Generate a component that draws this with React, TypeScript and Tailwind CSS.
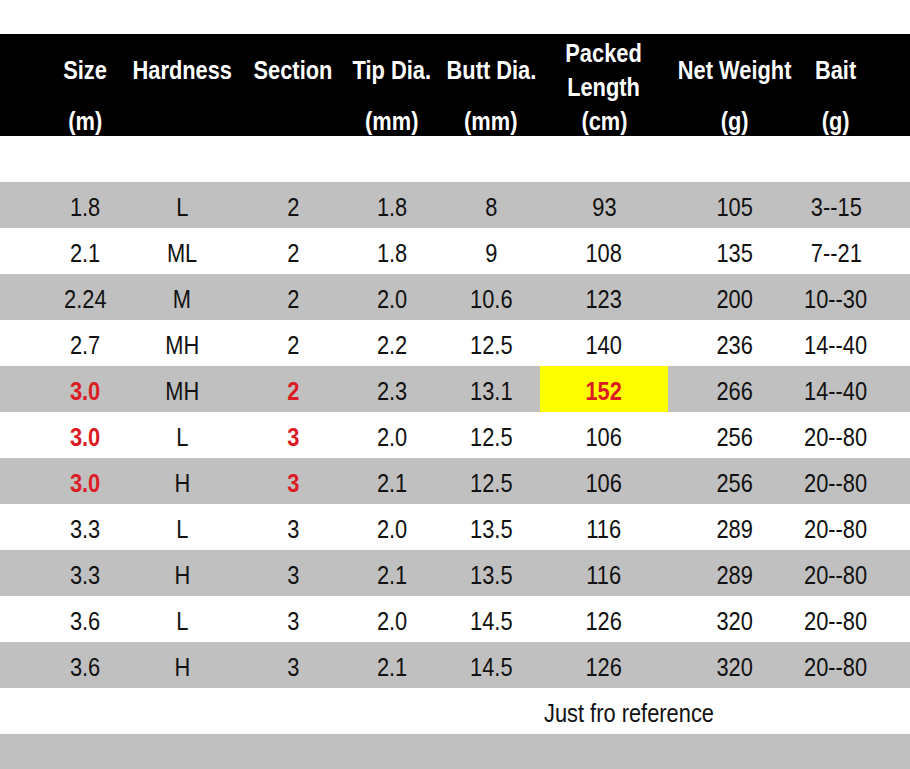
import React from 'react';

type Cell = { text: string; red?: boolean; highlight?: boolean };

const cols = 'grid grid-cols-[70px_124px_98px_100px_98px_128px_134px_68px] pl-[50px]';

const rows: string[][] = [
  ['1.8', 'L', '2', '1.8', '8', '93', '105', '3--15'],
  ['2.1', 'ML', '2', '1.8', '9', '108', '135', '7--21'],
  ['2.24', 'M', '2', '2.0', '10.6', '123', '200', '10--30'],
  ['2.7', 'MH', '2', '2.2', '12.5', '140', '236', '14--40'],
  ['3.0', 'MH', '2', '2.3', '13.1', '152', '266', '14--40'],
  ['3.0', 'L', '3', '2.0', '12.5', '106', '256', '20--80'],
  ['3.0', 'H', '3', '2.1', '12.5', '106', '256', '20--80'],
  ['3.3', 'L', '3', '2.0', '13.5', '116', '289', '20--80'],
  ['3.3', 'H', '3', '2.1', '13.5', '116', '289', '20--80'],
  ['3.6', 'L', '3', '2.0', '14.5', '126', '320', '20--80'],
  ['3.6', 'H', '3', '2.1', '14.5', '126', '320', '20--80'],
];

function toCells(row: string[], index: number): Cell[] {
  // rows 5-7 have the 3.0m models marked in red
  const marked = index >= 4 && index <= 6;
  return row.map((text, col) => ({
    text,
    red: marked && (col === 0 || col === 2 || (index === 4 && col === 5)),
    highlight: index === 4 && col === 5,
  }));
}

const headTop = ['Size', 'Hardness', 'Section', 'Tip Dia.', 'Butt Dia.', 'Packed\nLength', 'Net Weight', 'Bait'];
const headUnits = ['(m)', '', '', '(mm)', '(mm)', '(cm)', '(g)', '(g)'];

// the source picture uses a narrow face, so squeeze Arial sideways
const narrow = 'inline-block scale-x-[0.84] whitespace-pre';

export default function App() {
  return (
    <div className="w-[910px] h-[769px] overflow-hidden bg-white font-['Liberation_Sans',Arial,sans-serif] text-[26px] text-[#111]">
      <div className="h-[34px]" />

      <div className="bg-black text-white font-bold h-[102px]">
        <div className={`${cols} h-[72px]`}>
          {headTop.map((label, i) => (
            <div key={i} className="flex items-center justify-center text-center leading-[34px]">
              <span className={narrow}>{label}</span>
            </div>
          ))}
        </div>
        <div className={`${cols} h-[30px]`}>
          {headUnits.map((unit, i) => (
            <div key={i} className="flex items-center justify-center leading-none">
              <span className={narrow}>{unit}</span>
            </div>
          ))}
        </div>
      </div>

      <div className="h-[46px]" />

      {rows.map((row, r) => (
        <div key={r} className={`${cols} h-[46px] ${r % 2 === 0 ? 'bg-[#c0c0c0]' : 'bg-white'}`}>
          {toCells(row, r).map((cell, c) => (
            <div
              key={c}
              className={`flex items-center justify-center pt-[3px] leading-none ${cell.highlight ? 'bg-[#ffff00]' : ''} ${
                cell.red ? 'font-bold text-[#dc1c24]' : ''
              }`}
            >
              <span className={narrow}>{cell.text}</span>
            </div>
          ))}
        </div>
      ))}

      <div className="h-[46px] flex items-center pt-[3px] pl-[544px] leading-none">
        <span className={`${narrow} origin-left`}>Just fro reference</span>
      </div>
      <div className="h-[35px] bg-[#c0c0c0]" />
    </div>
  );
}
